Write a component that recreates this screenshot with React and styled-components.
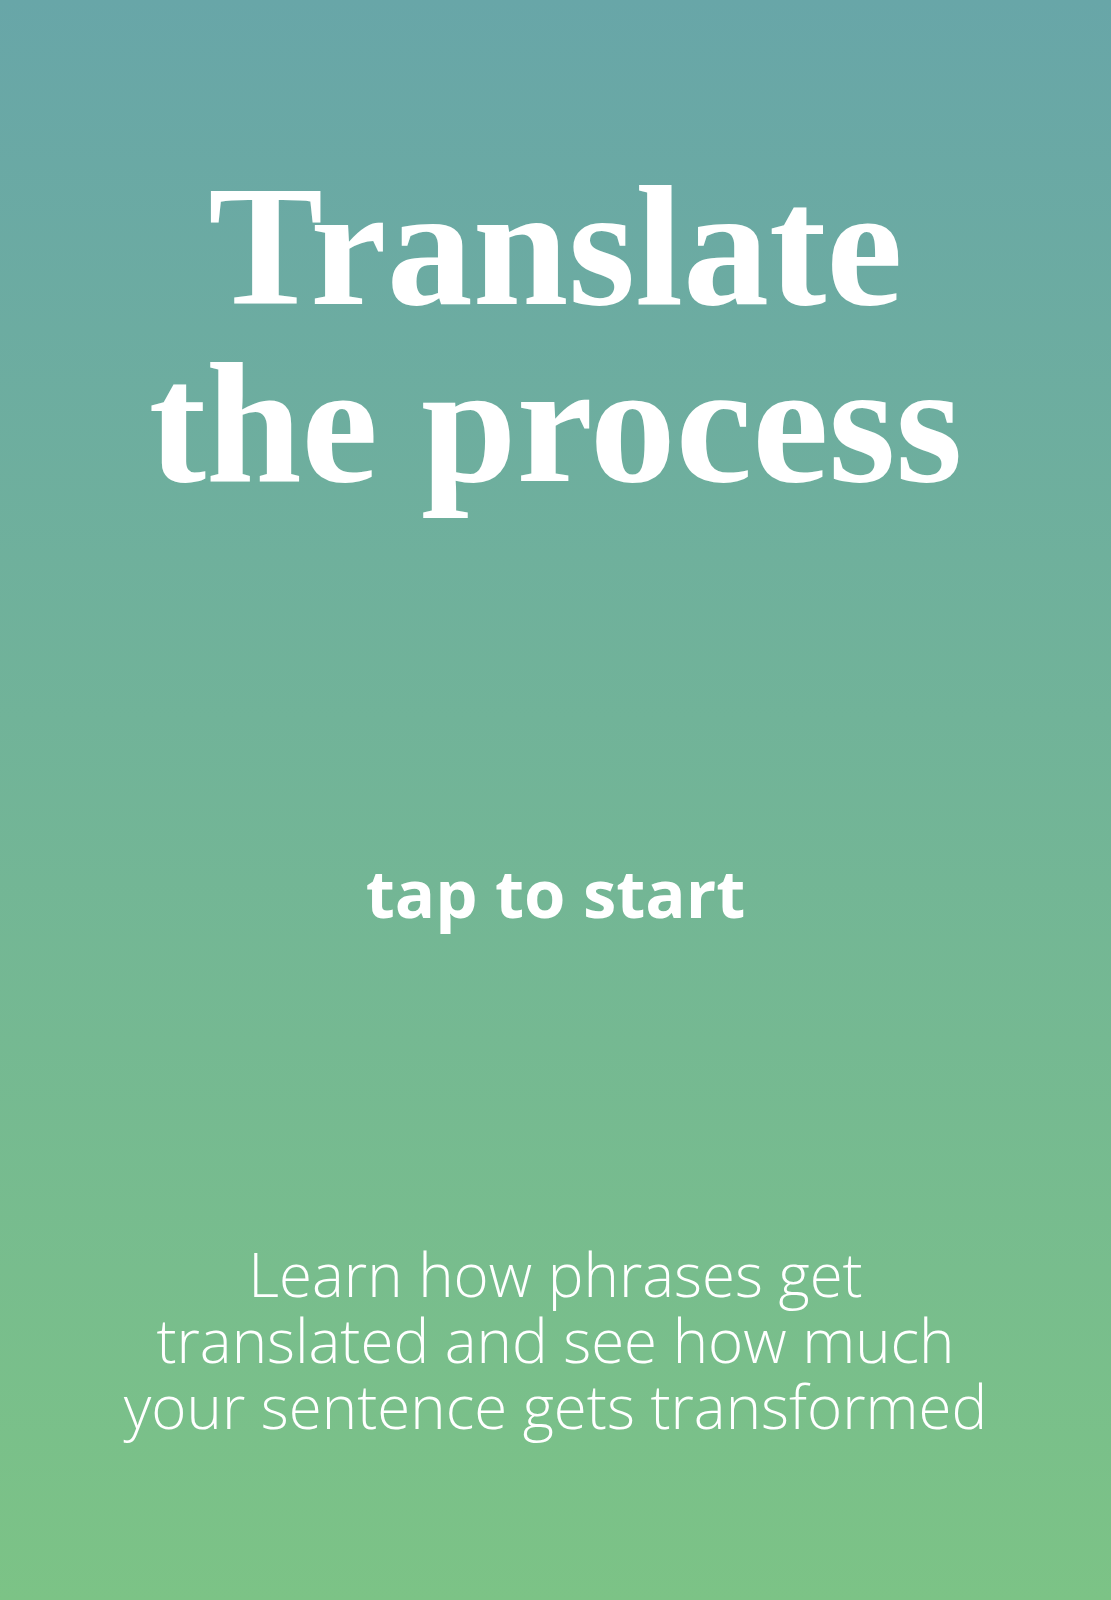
import React from "react";
import styled, { createGlobalStyle } from "styled-components";

const GlobalStyle = createGlobalStyle`
  html, body {
    margin: 0;
    padding: 0;
  }
`;

const Screen = styled.div`
  height: 1600px;
  display: flex;
  flex-direction: column;
  align-items: center;
  background: linear-gradient(180deg, #68a6a8 0%, #7cc386 100%);
  color: #ffffff;
  text-align: center;
  cursor: pointer;
  user-select: none;
`;

const Title = styled.h1`
  margin: 158px 0 0;
  font-family: "Liberation Serif", "Times New Roman", serif;
  font-weight: 700;
  font-size: 172px;
  line-height: 177px;
`;

const Tap = styled.div`
  margin-top: 347px;
  font-family: "Open Sans", sans-serif;
  font-weight: 700;
  font-size: 67px;
  line-height: 1;
`;

const Blurb = styled.p`
  margin: 315px 0 0;
  font-family: "Open Sans", sans-serif;
  font-weight: 300;
  font-size: 60px;
  line-height: 66px;
`;

const App = () => {
  return (
    <>
      <GlobalStyle />
      <Screen>
        <Title>
          Translate
          <br />
          the process
        </Title>
        <Tap>tap to start</Tap>
        <Blurb>
          Learn how phrases get
          <br />
          translated and see how much
          <br />
          your sentence gets transformed
        </Blurb>
      </Screen>
    </>
  );
};

export default App;
